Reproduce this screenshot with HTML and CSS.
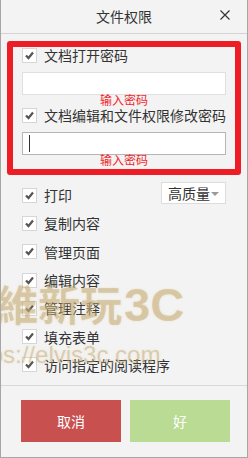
FILE: index.html
```html
<!DOCTYPE html>
<html lang="zh-CN">
<head>
<meta charset="utf-8">
<title>文件权限</title>
<link rel="stylesheet" href="styles.css">
</head>
<body>
<div class="window">
  <header class="titlebar">
    <span class="title">文件权限</span>
    <button class="close" aria-label="关闭">
      <svg width="10" height="10" viewBox="0 0 10 10"><path d="M0.5 0.5 L9.5 9.5 M9.5 0.5 L0.5 9.5" stroke="#333" stroke-width="1.2" fill="none"/></svg>
    </button>
  </header>

  <section class="pwd-box">
    <label class="check-row">
      <span class="cb"><svg width="13" height="13" viewBox="0 0 13 13"><path d="M3 6.5 L5.5 9 L10 3.5" stroke="#555" stroke-width="2.2" fill="none"/></svg></span>
      <span class="lbl">文档打开密码</span>
    </label>
    <div class="input"></div>
    <div class="hint">输入密码</div>
    <label class="check-row second">
      <span class="cb"><svg width="13" height="13" viewBox="0 0 13 13"><path d="M3 6.5 L5.5 9 L10 3.5" stroke="#555" stroke-width="2.2" fill="none"/></svg></span>
      <span class="lbl">文档编辑和文件权限修改密码</span>
    </label>
    <div class="input focused"><span class="caret"></span></div>
    <div class="hint">输入密码</div>
  </section>

  <ul class="perms">
    <li>
      <span class="cb"><svg width="13" height="13" viewBox="0 0 13 13"><path d="M3 6.5 L5.5 9 L10 3.5" stroke="#555" stroke-width="2.2" fill="none"/></svg></span>
      <span class="lbl">打印</span>
      <span class="select">高质量<span class="arrow"></span></span>
    </li>
    <li>
      <span class="cb"><svg width="13" height="13" viewBox="0 0 13 13"><path d="M3 6.5 L5.5 9 L10 3.5" stroke="#555" stroke-width="2.2" fill="none"/></svg></span>
      <span class="lbl">复制内容</span>
    </li>
    <li>
      <span class="cb"><svg width="13" height="13" viewBox="0 0 13 13"><path d="M3 6.5 L5.5 9 L10 3.5" stroke="#555" stroke-width="2.2" fill="none"/></svg></span>
      <span class="lbl">管理页面</span>
    </li>
    <li>
      <span class="cb"><svg width="13" height="13" viewBox="0 0 13 13"><path d="M3 6.5 L5.5 9 L10 3.5" stroke="#555" stroke-width="2.2" fill="none"/></svg></span>
      <span class="lbl">编辑内容</span>
    </li>
    <li>
      <span class="cb"><svg width="13" height="13" viewBox="0 0 13 13"><path d="M3 6.5 L5.5 9 L10 3.5" stroke="#555" stroke-width="2.2" fill="none"/></svg></span>
      <span class="lbl">管理注释</span>
    </li>
    <li>
      <span class="cb"><svg width="13" height="13" viewBox="0 0 13 13"><path d="M3 6.5 L5.5 9 L10 3.5" stroke="#555" stroke-width="2.2" fill="none"/></svg></span>
      <span class="lbl">填充表单</span>
    </li>
    <li>
      <span class="cb"><svg width="13" height="13" viewBox="0 0 13 13"><path d="M3 6.5 L5.5 9 L10 3.5" stroke="#555" stroke-width="2.2" fill="none"/></svg></span>
      <span class="lbl">访问指定的阅读程序</span>
    </li>
  </ul>

  <footer class="actions">
    <button class="btn cancel">取消</button>
    <button class="btn ok">好</button>
  </footer>

  <div class="watermark" aria-hidden="true">
    <span class="wm-big">維新玩<span class="wm-latin">3C</span></span>
    <span class="wm-url">https://elvis3c.com</span>
  </div>
</div>
</body>
</html>
```

FILE: styles.css
```css
* { box-sizing: border-box; }

html, body {
  margin: 0;
  padding: 0;
  background: #f3f3f3;
}

body {
  width: 248px;
  height: 458px;
  overflow: hidden;
  font-family: "Noto Sans CJK SC", "Microsoft YaHei", sans-serif;
  color: #333;
}

.window {
  position: relative;
  width: 248px;
  height: 458px;
  background: #f3f3f3;
  border: 1px solid #a6a6a6;
  border-top: none;
  display: flex;
  flex-direction: column;
  overflow: hidden;
}

.titlebar {
  position: relative;
  height: 34px;
  border-bottom: 1px solid #d4d4d4;
  display: flex;
  align-items: center;
  justify-content: center;
}

.title {
  font-size: 14px;
  line-height: 33px;
  color: #333;
}

.close {
  position: absolute;
  right: 17px;
  top: 10px;
  width: 10px;
  height: 10px;
  padding: 0;
  margin: 0;
  border: none;
  background: transparent;
  display: block;
}
.close svg { display: block; }

.pwd-box {
  margin: 7px 6px 0 6px;
  border: 6px solid #ee1c25;
  border-radius: 3px;
  padding: 0 9px 3px 9px;
  display: flex;
  flex-direction: column;
}

.check-row {
  display: flex;
  align-items: center;
  gap: 7px;
  height: 16px;
}
.check-row.second { margin-top: 1px; }

.cb {
  flex: 0 0 auto;
  width: 15px;
  height: 15px;
  background: #fff;
  border: 1px solid #d6d6d6;
  display: flex;
  align-items: center;
  justify-content: center;
}
.cb svg { display: block; }

.lbl {
  font-size: 14px;
  line-height: 16px;
  color: #333;
  white-space: nowrap;
}

.input {
  margin-top: 9px;
  height: 23px;
  background: #fff;
  border: 1px solid #e0e0e0;
  display: flex;
  align-items: center;
  padding-left: 6px;
}
.input.focused { border-color: #b5b5b5; }

.caret {
  width: 1px;
  height: 17px;
  background: #333;
}

.hint {
  margin-top: -1px;
  height: 12px;
  font-size: 12px;
  line-height: 12px;
  text-align: center;
  color: #f2262b;
}

.perms {
  list-style: none;
  margin: 6px 0 0 0;
  padding: 0 21px;
}

.perms li {
  height: 28.3px;
  display: flex;
  align-items: center;
  gap: 7px;
}

.select {
  margin-left: auto;
  width: 65px;
  height: 22px;
  margin-top: -4px;
  background: #fff;
  border: 1px solid #dcdcdc;
  display: flex;
  align-items: center;
  padding-left: 6px;
  font-size: 14px;
  color: #333;
}

.arrow {
  width: 0;
  height: 0;
  margin-left: 1px;
  margin-top: 1px;
  border-left: 4px solid transparent;
  border-right: 4px solid transparent;
  border-top: 4px solid #9a9a9a;
}

.actions {
  margin-top: auto;
  border-top: 1px solid #d8d8d8;
  padding: 14px 0 15px 20px;
  display: flex;
  gap: 9px;
}

.btn {
  width: 100px;
  height: 42px;
  border: none;
  margin: 0;
  padding: 0;
  font-family: "Noto Sans CJK SC", "Microsoft YaHei", sans-serif;
  font-size: 14px;
  color: #fff;
}
.btn.cancel { background: #c85150; }
.btn.ok { background: #b9db94; }

.watermark {
  position: absolute;
  left: 0;
  top: 0;
  width: 248px;
  height: 458px;
  pointer-events: none;
}

.wm-big {
  position: absolute;
  left: -5px;
  top: 280px;
  font-family: "Noto Sans CJK TC", "Liberation Sans", sans-serif;
  font-weight: 700;
  font-size: 42px;
  line-height: 46px;
  white-space: nowrap;
  color: rgba(110, 110, 110, 0.24);
  text-shadow: 0 0 2px rgba(245, 205, 120, 0.55);
}

.wm-latin {
  font-family: "Liberation Sans", sans-serif;
  font-size: 47px;
  margin-left: 2px;
}

.wm-url {
  position: absolute;
  left: -38px;
  top: 342px;
  font-family: "Liberation Sans", sans-serif;
  font-size: 24px;
  line-height: 26px;
  white-space: nowrap;
  color: rgba(110, 110, 110, 0.22);
  text-shadow: 0 0 2px rgba(245, 205, 120, 0.5);
}
```
